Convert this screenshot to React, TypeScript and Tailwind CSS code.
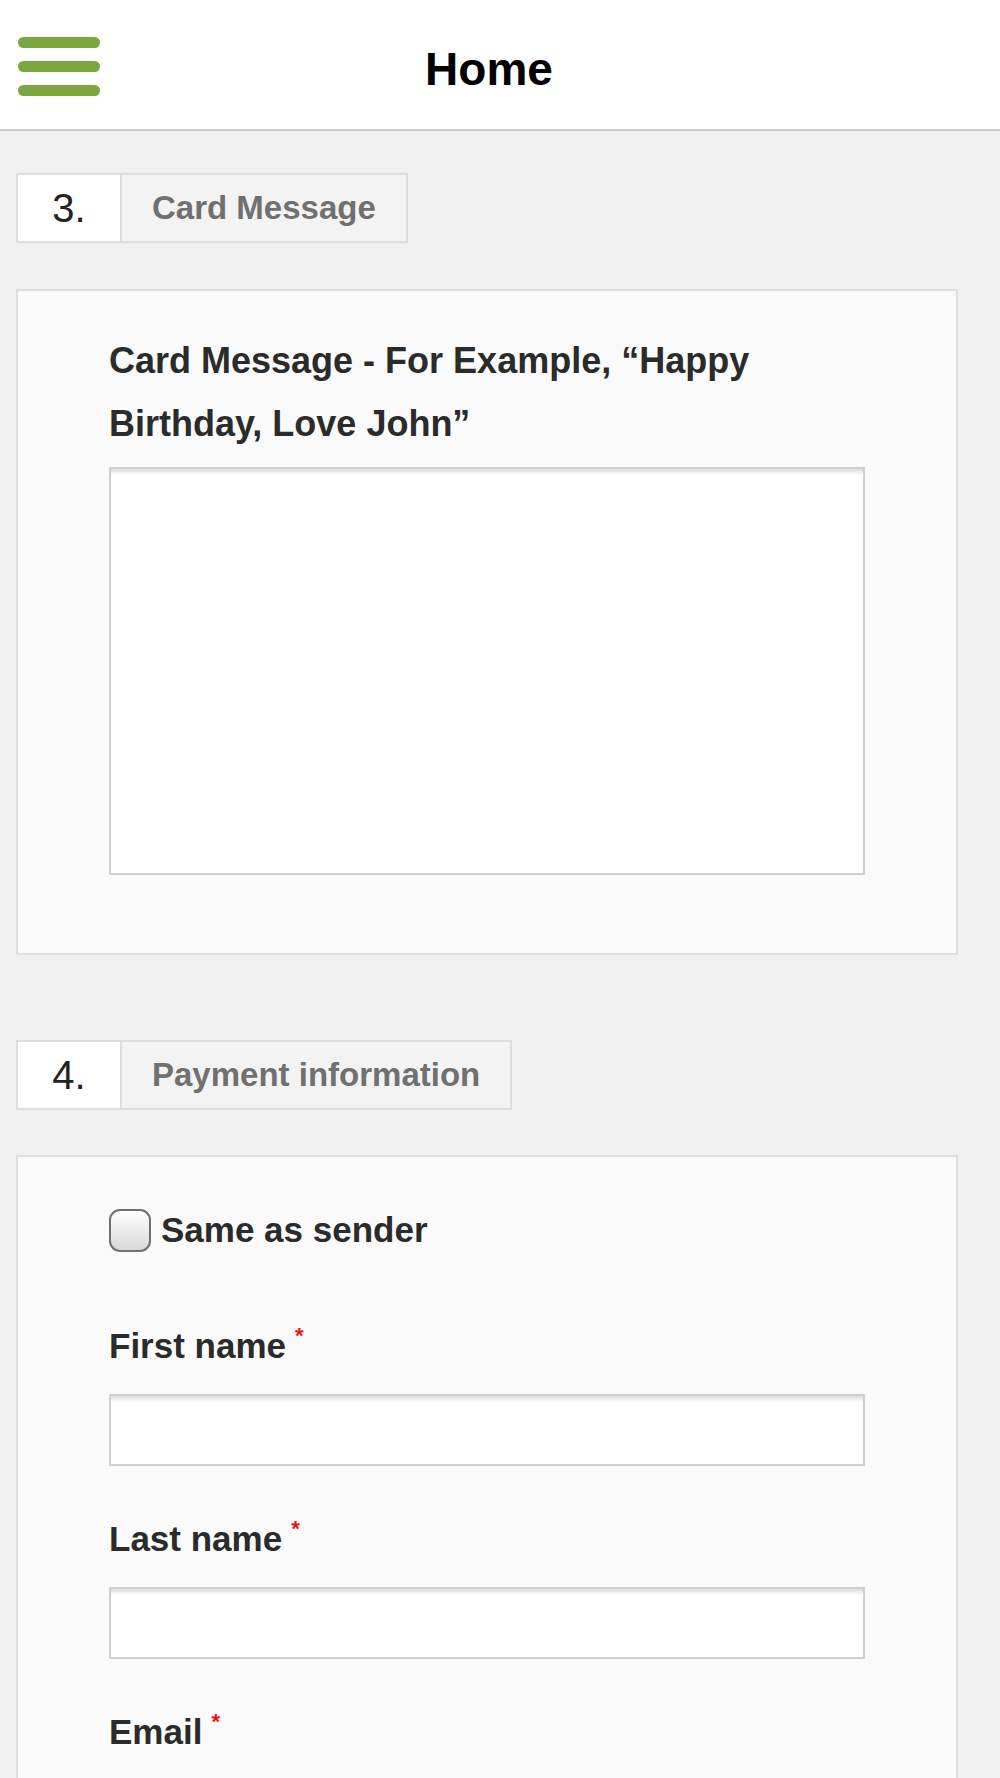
const font = { fontFamily: '"Liberation Sans", Arial, Helvetica, sans-serif' };

function StepHeader({ n, title }: { n: string; title: string }) {
  return (
    <div className="flex h-[70px] w-fit border-2 border-[#dedede]">
      <div className="flex w-[102px] items-center justify-center bg-white text-[40px] text-[#222]">
        {n}
      </div>
      <div className="flex items-center border-l-2 border-[#dedede] bg-[#f3f3f3] px-[30px] text-[33px] font-bold text-[#707070]">
        {title}
      </div>
    </div>
  );
}

function Field({ label }: { label: string }) {
  return (
    <div className="flex flex-col">
      <div className="flex h-[60px] items-center text-[35px] font-bold text-[#2b2b2b]">
        {label}
        <span className="ml-[9px] -mt-[22px] text-[22px] text-[#e8141c]">*</span>
      </div>
      <div className="mt-[17px] h-[72px] w-full border-2 border-[#cfcfcf] bg-white shadow-[inset_0_5px_4px_-2px_rgba(0,0,0,0.14)]" />
    </div>
  );
}

export default function App() {
  return (
    <div className="min-h-[1778px] w-[1000px] bg-[#f1f1f1]" style={font}>
      <header className="relative flex h-[131px] items-center justify-center border-b-2 border-[#cbcbcb] bg-white">
        <button className="absolute left-[18px] top-[37px] flex w-[82px] flex-col gap-[13px]">
          <span className="h-[11px] rounded-full bg-[#7aa83e]" />
          <span className="h-[11px] rounded-full bg-[#7aa83e]" />
          <span className="h-[11px] rounded-full bg-[#7aa83e]" />
        </button>
        <h1 className="ml-[-22px] pt-[10px] text-[46px] font-bold text-black">Home</h1>
      </header>

      <main className="pl-[16px] pr-[42px] pt-[42px]">
        <StepHeader n="3." title="Card Message" />

        <section className="mt-[46px] border-2 border-[#dedede] bg-[#fafafa] px-[91px] pb-[78px] pt-[38px]">
          <p className="text-[36px] font-bold leading-[63px] text-[#2b2b2b]">
            Card Message - For Example, “Happy
            <br />
            Birthday, Love John”
          </p>
          <div className="mt-[12px] h-[408px] border-2 border-[#cfcfcf] bg-white shadow-[inset_0_5px_4px_-2px_rgba(0,0,0,0.14)]" />
        </section>

        <div className="mt-[85px]">
          <StepHeader n="4." title="Payment information" />
        </div>

        <section className="mt-[45px] flex flex-col gap-[60px] border-2 border-b-0 border-[#dedede] bg-[#fafafa] px-[91px] pb-[40px] pt-[47px]">
          <label className="flex items-center gap-[10px] text-[35px] font-bold text-[#2b2b2b]">
            <span className="h-[43px] w-[42px] rounded-[11px] border-2 border-[#6f6f6f] bg-gradient-to-b from-white to-[#d9d9d9]" />
            Same as sender
          </label>
          <div className="flex flex-col gap-[44px]">
            <Field label="First name" />
            <Field label="Last name" />
            <div className="flex h-[60px] items-center text-[35px] font-bold text-[#2b2b2b]">
              Email
              <span className="ml-[9px] -mt-[22px] text-[22px] text-[#e8141c]">*</span>
            </div>
          </div>
        </section>
      </main>
    </div>
  );
}
